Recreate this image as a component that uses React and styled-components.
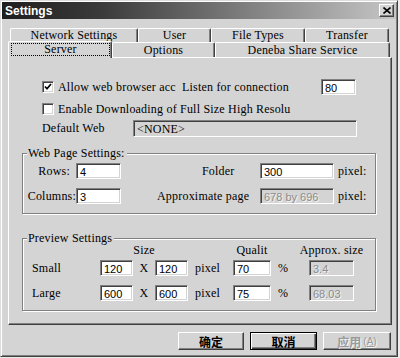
import styled, { createGlobalStyle } from "styled-components";

const Global = createGlobalStyle`
  html, body {
    margin: 0;
    background: #ececec;
  }
`;

const FACE = "#d4d4d4";

const Window = styled.div`
  box-sizing: border-box;
  width: 398px;
  height: 357px;
  background: ${FACE};
  border-top: 1px solid #dcdcdc;
  border-left: 1px solid #dcdcdc;
  border-right: 1px solid #404040;
  border-bottom: 1px solid #404040;
  box-shadow: inset 1px 1px 0 #fff, inset -1px -1px 0 #808080;
  padding: 1px;
  display: flex;
  flex-direction: column;
  font-family: "Liberation Serif", "Times New Roman", serif;
  font-size: 12px;
  letter-spacing: 0.2px;
  color: #000;
`;

const TitleBar = styled.div`
  height: 17px;
  background: linear-gradient(to right, #1e1e1e 0%, #3a3a3a 25%, #c6c6c6 100%);
  display: flex;
  align-items: center;
  justify-content: space-between;
  padding: 0 2px 0 3px;
`;

const Title = styled.span`
  color: #fff;
  font: bold 12px "Liberation Sans", Arial, sans-serif;
  letter-spacing: 0;
`;

const CloseButton = styled.div`
  box-sizing: border-box;
  width: 15px;
  height: 13px;
  background: ${FACE};
  border: 1px solid;
  border-color: #fff #404040 #404040 #fff;
  box-shadow: inset -1px -1px 0 #808080;
  display: flex;
  align-items: center;
  justify-content: center;
`;

const TabArea = styled.div`
  margin-top: 9px;
  padding-left: 8px;
  display: flex;
  flex-direction: column;
`;

const TabRow = styled.div`
  display: flex;
  height: ${(p) => p.$h}px;
`;

const Tab = styled.div`
  box-sizing: border-box;
  width: ${(p) => p.$w}px;
  flex: none;
  background: ${FACE};
  border-top: 1px solid #fff;
  border-left: 1px solid #fff;
  border-right: 1px solid #404040;
  box-shadow: inset -1px 0 0 #808080;
  border-radius: 2px 2px 0 0;
  display: flex;
  align-items: center;
  justify-content: center;
  white-space: nowrap;
  ${(p) =>
    p.$active &&
    `
    position: relative;
    z-index: 1;
    height: 17px;
    margin-top: -1px;
    margin-left: -2px;
    align-items: stretch;
    padding: 1px 1px 2px 2px;
  `}
`;

const Focus = styled.span`
  flex: 1;
  display: flex;
  align-items: center;
  justify-content: center;
  outline: 1px dotted #000;
  outline-offset: -1px;
`;

const Panel = styled.div`
  box-sizing: border-box;
  width: 384px;
  height: 268px;
  margin-left: 6px;
  border-top: 1px solid #fff;
  border-left: 1px solid #fff;
  border-right: 1px solid #404040;
  border-bottom: 1px solid #404040;
  box-shadow: inset -1px -1px 0 #808080;
  padding-top: 21px;
  display: flex;
  flex-direction: column;
`;

const Row = styled.div`
  display: flex;
  align-items: center;
  height: ${(p) => p.$h || 16}px;
  margin-left: ${(p) => p.$indent || 0}px;
  margin-top: ${(p) => p.$top || 0}px;
`;

const Cell = styled.span`
  box-sizing: border-box;
  flex: none;
  width: ${(p) => (p.$w ? `${p.$w}px` : "auto")};
  padding-left: ${(p) => p.$pl || 0}px;
  padding-right: ${(p) => p.$pr || 0}px;
  text-align: ${(p) => p.$align || "left"};
  white-space: nowrap;
`;

const CheckBox = styled.span`
  box-sizing: border-box;
  width: 12px;
  height: 12px;
  flex: none;
  background: #fff;
  border-top: 1px solid #808080;
  border-left: 1px solid #808080;
  border-right: 1px solid #fff;
  border-bottom: 1px solid #fff;
  box-shadow: inset 1px 1px 0 #404040, inset -1px -1px 0 ${FACE};
  display: flex;
  align-items: center;
  justify-content: center;
  margin-right: 4px;
`;

const Field = styled.span`
  box-sizing: border-box;
  flex: none;
  width: ${(p) => p.$w}px;
  height: ${(p) => p.$h || 16}px;
  background: ${(p) => (p.$disabled ? FACE : "#fff")};
  border-top: 1px solid #808080;
  border-left: 1px solid #808080;
  border-right: 1px solid #fff;
  border-bottom: 1px solid #fff;
  box-shadow: inset 1px 1px 0 #404040, inset -1px -1px 0 ${FACE};
  padding: 1px 0 0 3px;
  display: flex;
  align-items: center;
  font-family: ${(p) =>
    p.$serif ? `"Liberation Serif", serif` : `"Liberation Sans", Arial, sans-serif`};
  font-size: ${(p) => (p.$serif ? "12px" : "11px")};
  letter-spacing: ${(p) => (p.$serif ? "0.2px" : "0")};
  color: ${(p) => (p.$disabled && !p.$serif ? "#8c8c8c" : "#000")};
  text-shadow: ${(p) => (p.$disabled && !p.$serif ? "1px 1px 0 #f4f4f4" : "none")};
`;

const Group = styled.fieldset`
  box-sizing: border-box;
  width: 354px;
  margin: ${(p) => p.$top}px 0 0 13px;
  padding: ${(p) => p.$pad};
  border: 1px solid #808080;
  box-shadow: 1px 1px 0 #fff, inset 1px 1px 0 #fff;
  min-inline-size: 0;
`;

const Legend = styled.legend`
  padding: 0 2px 0 1px;
  margin-left: 4px;
  background: ${FACE};
  line-height: 12px;
  white-space: nowrap;
`;

const GroupRow = styled.div`
  display: flex;
  align-items: center;
  height: 16px;
  & + & {
    margin-top: 9px;
  }
`;

const PreviewGrid = styled.div`
  display: grid;
  grid-template-columns: 77px 33px 22px 33px 45px 38px 38px 45px;
  grid-auto-rows: ${(p) => p.$rowH}px;
  row-gap: 9px;
  align-items: center;
  margin-bottom: ${(p) => p.$mb || 0}px;
`;

const GridText = styled.span`
  white-space: nowrap;
  justify-self: ${(p) => p.$justify || "start"};
  grid-column: ${(p) => p.$col || "auto"};
  padding-left: ${(p) => p.$pl || 0}px;
`;

const ButtonBar = styled.div`
  display: flex;
  justify-content: flex-end;
  gap: 6px;
  margin-top: 7px;
  padding-right: 5px;
`;

const Button = styled.div`
  box-sizing: border-box;
  width: ${(p) => p.$w}px;
  height: 18px;
  background: ${FACE};
  border: 1px solid;
  border-color: ${(p) => (p.$default ? "#000" : "#fff #404040 #404040 #fff")};
  box-shadow: ${(p) =>
    p.$default
      ? "inset 1px 1px 0 #fff, inset -1px -1px 0 #404040, inset -2px -2px 0 #808080"
      : "inset -1px -1px 0 #808080"};
  display: flex;
  align-items: center;
  justify-content: center;
  font-family: "Noto Sans CJK SC", sans-serif;
  font-size: 12px;
  font-weight: 700;
  letter-spacing: 0;
  color: ${(p) => (p.$disabled ? "#9a9a9a" : "#000")};
  text-shadow: ${(p) => (p.$disabled ? "1px 1px 0 #f4f4f4" : "none")};
  & small {
    font: 10px "Liberation Sans", Arial, sans-serif;
    margin-left: 2px;
  }
`;

function CloseGlyph() {
  return (
    <svg width="8" height="7" viewBox="0 0 8 7">
      <path d="M0.5 0.5 L7.5 6.5 M7.5 0.5 L0.5 6.5" stroke="#000" strokeWidth="1.6" />
    </svg>
  );
}

function Check() {
  return (
    <svg width="8" height="8" viewBox="0 0 8 8">
      <path d="M1 3.5 L3 5.8 L7 1" stroke="#000" strokeWidth="1.7" fill="none" />
    </svg>
  );
}

const previewRows = [
  { name: "Small", w: "120", h: "120", q: "70", size: "3.4" },
  { name: "Large", w: "600", h: "600", q: "75", size: "68.03" },
];

export default function App() {
  return (
    <>
      <Global />
      <Window>
        <TitleBar>
          <Title>Settings</Title>
          <CloseButton>
            <CloseGlyph />
          </CloseButton>
        </TitleBar>

        <TabArea>
          <TabRow $h={14}>
            <Tab $w={128}>Network Settings</Tab>
            <Tab $w={73}>User</Tab>
            <Tab $w={94}>File Types</Tab>
            <Tab $w={84}>Transfer</Tab>
          </TabRow>
          <TabRow $h={15}>
            <Tab $w={104} $active>
              <Focus>Server</Focus>
            </Tab>
            <Tab $w={103}>Options</Tab>
            <Tab $w={175}>Deneba Share Service</Tab>
          </TabRow>
        </TabArea>

        <Panel>
          <Row $indent={33}>
            <CheckBox>
              <Check />
            </CheckBox>
            <Cell $w={124}>Allow web browser acc</Cell>
            <Cell $w={139}>Listen for connection</Cell>
            <Field $w={35}>80</Field>
          </Row>
          <Row $indent={33} $top={6}>
            <CheckBox />
            <Cell>Enable Downloading of Full Size High Resolu</Cell>
          </Row>
          <Row $indent={33} $top={3} $h={17}>
            <Cell $w={91}>Default Web</Cell>
            <Field $w={224} $h={17} $disabled $serif>
              &lt;NONE&gt;
            </Field>
          </Row>

          <Group $top={10} $pad="4px 0 9px 0">
            <Legend>Web Page Settings:</Legend>
            <GroupRow>
              <Cell $w={53} $align="right" $pr={6}>Rows:</Cell>
              <Field $w={45}>4</Field>
              <Cell $w={139} $pl={81}>Folder</Cell>
              <Field $w={74}>300</Field>
              <Cell $pl={4}>pixel:</Cell>
            </GroupRow>
            <GroupRow>
              <Cell $w={53} $align="right">Columns:</Cell>
              <Field $w={45}>3</Field>
              <Cell $w={139} $pl={36}>Approximate page</Cell>
              <Field $w={74} $disabled>678 by 696</Field>
              <Cell $pl={4}>pixel:</Cell>
            </GroupRow>
          </Group>

          <Group $top={18} $pad="0 0 9px 0">
            <Legend>Preview Settings</Legend>
            <PreviewGrid $rowH={12} $mb={4}>
              <GridText $col="2 / 5" $justify="center">Size</GridText>
              <GridText $col="6" $justify="center">Qualit</GridText>
              <GridText $col="8" $justify="center">Approx. size</GridText>
            </PreviewGrid>
            <PreviewGrid $rowH={16}>
              {previewRows.map((r) => (
                <>
                  <GridText $pl={9}>{r.name}</GridText>
                  <Field $w={33}>{r.w}</Field>
                  <GridText $justify="center">X</GridText>
                  <Field $w={33}>{r.h}</Field>
                  <GridText $pl={7}>pixel</GridText>
                  <Field $w={38}>{r.q}</Field>
                  <GridText $pl={7}>%</GridText>
                  <Field $w={45} $disabled>{r.size}</Field>
                </>
              ))}
            </PreviewGrid>
          </Group>
        </Panel>

        <ButtonBar>
          <Button $w={66}>确定</Button>
          <Button $w={67} $default>取消</Button>
          <Button $w={68} $disabled>
            应用<small>(<u>A</u>)</small>
          </Button>
        </ButtonBar>
      </Window>
    </>
  );
}
